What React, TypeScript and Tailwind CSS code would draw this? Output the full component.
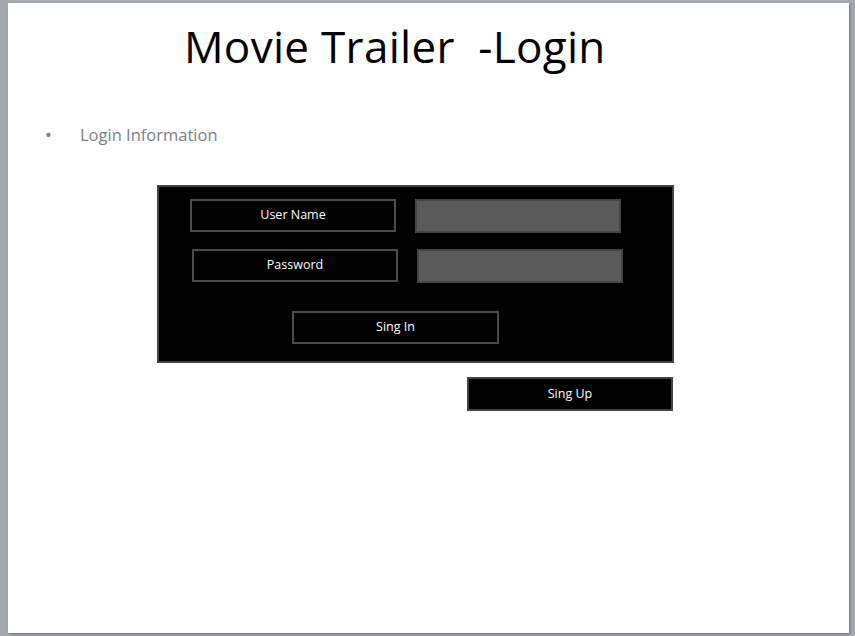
export default function App() {
  return (
    <div className="w-[855px] h-[636px] bg-[#a4a8ad] pl-[8px] pt-[3px] overflow-hidden">
      <div
        className="w-[841px] h-[630px] bg-white flex flex-col shadow-[1px_1px_2px_rgba(0,0,0,0.35)]"
        style={{ fontFamily: '"Open Sans", "Liberation Sans", sans-serif' }}
      >
        {/* title */}
        <h1 className="mt-[15px] ml-[176px] text-[44px] leading-[57px] text-black tracking-[0.3px] whitespace-pre">
          Movie Trailer  -Login
        </h1>

        {/* bullet */}
        <div className="mt-[48px] flex items-center text-[#7f7f7f] text-[16.5px] leading-[24px]">
          <span className="ml-[37px] w-[35px] text-[18px]">•</span>
          <span>Login Information</span>
        </div>

        {/* login panel */}
        <div className="mt-[38px] ml-[149px] w-[517px] h-[178px] bg-black border-2 border-[#434343] flex flex-col text-white text-[12.5px]">
          <div className="mt-[12px] ml-[31px] flex gap-[19px]">
            <div className="w-[206px] h-[33px] border-2 border-[#4a4a4a] flex items-center justify-center">
              User Name
            </div>
            <div className="w-[206px] h-[34px] bg-[#5a5a5a] border-2 border-[#444444]" />
          </div>
          <div className="mt-[16px] ml-[33px] flex gap-[19px]">
            <div className="w-[206px] h-[33px] border-2 border-[#4a4a4a] flex items-center justify-center">
              Password
            </div>
            <div className="w-[206px] h-[34px] bg-[#5a5a5a] border-2 border-[#444444]" />
          </div>
          <div className="mt-[28px] ml-[133px] w-[207px] h-[33px] border-2 border-[#4a4a4a] flex items-center justify-center">
            Sing In
          </div>
        </div>

        <div className="mt-[14px] ml-[459px] w-[206px] h-[34px] bg-black border-2 border-[#434343] flex items-center justify-center text-white text-[12.5px]">
          Sing Up
        </div>
      </div>
    </div>
  );
}
